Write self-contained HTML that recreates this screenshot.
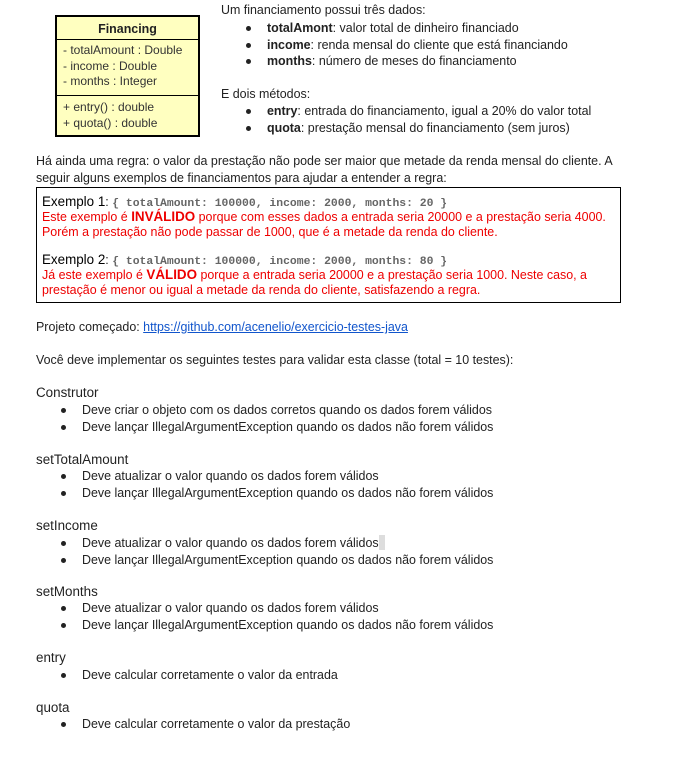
<!DOCTYPE html>
<html><head><meta charset="utf-8"><style>
body{margin:0;width:680px;height:763px;background:#fff;font-family:"Liberation Sans",sans-serif;font-size:12.45px;color:#222;position:relative;overflow:hidden}
.l{position:absolute;white-space:nowrap;line-height:16px}
.b{position:absolute;width:5px;height:5px;border-radius:50%;background:#222}
.h{font-size:13.4px}
.red{color:#e00}
.mono{font-family:"Liberation Mono",monospace;color:#666;font-size:11.4px;font-weight:bold}
.uml{position:absolute;left:55px;top:15px;width:141px;height:118px;background:#ffffc0;border:2px solid #000}
.uml div{position:absolute;left:0;right:0}
</style></head><body>
<div class="uml">
<div style="top:4px;text-align:center;font-weight:bold;line-height:16px">Financing</div>
<div style="top:22px;border-top:1px solid #000"></div>
<div style="top:26px;left:6px;line-height:15.5px;color:#333;font-size:12px">- totalAmount : Double<br>- income : Double<br>- months : Integer</div>
<div style="top:78px;border-top:1px solid #000"></div>
<div style="top:82px;left:6px;line-height:16px;color:#333;font-size:12px">+ entry() : double<br>+ quota() : double</div>
</div>

<div class="l" style="left:221px;top:2px">Um financiamento possui três dados:</div>
<div class="b" style="left:246px;top:26px"></div><div class="l" style="left:267px;top:20px"><b>totalAmont</b>: valor total de dinheiro financiado</div>
<div class="b" style="left:246px;top:43px"></div><div class="l" style="left:267px;top:37px"><b>income</b>: renda mensal do cliente que está financiando</div>
<div class="b" style="left:246px;top:59px"></div><div class="l" style="left:267px;top:53px"><b>months</b>: número de meses do financiamento</div>
<div class="l" style="left:221px;top:86px">E dois métodos:</div>
<div class="b" style="left:246px;top:109px"></div><div class="l" style="left:267px;top:103px"><b>entry</b>: entrada do financiamento, igual a 20% do valor total</div>
<div class="b" style="left:246px;top:126px"></div><div class="l" style="left:267px;top:120px"><b>quota</b>: prestação mensal do financiamento (sem juros)</div>

<div class="l" style="left:36px;top:153px">Há ainda uma regra: o valor da prestação não pode ser maior que metade da renda mensal do cliente. A</div>
<div class="l" style="left:36px;top:170px">seguir alguns exemplos de financiamentos para ajudar a entender a regra:</div>

<div style="position:absolute;left:36px;top:187px;width:583px;height:114px;border:1px solid #000"></div>
<div class="l" style="left:42px;top:194px"><span class="h" style="color:#000">Exemplo 1</span>: <span class="mono">{ totalAmount: 100000, income: 2000, months: 20 }</span></div>
<div class="l red" style="left:42px;top:209px">Este exemplo é <b class="h">INVÁLIDO</b> porque com esses dados a entrada seria 20000 e a prestação seria 4000.</div>
<div class="l red" style="left:42px;top:224px">Porém a prestação não pode passar de 1000, que é a metade da renda do cliente.</div>
<div class="l" style="left:42px;top:252px"><span class="h" style="color:#000">Exemplo 2</span>: <span class="mono">{ totalAmount: 100000, income: 2000, months: 80 }</span></div>
<div class="l red" style="left:42px;top:267px">Já este exemplo é <b class="h">VÁLIDO</b> porque a entrada seria 20000 e a prestação seria 1000. Neste caso, a</div>
<div class="l red" style="left:42px;top:282px">prestação é menor ou igual a metade da renda do cliente, satisfazendo a regra.</div>

<div class="l" style="left:36px;top:319px">Projeto começado: <span style="color:#1155cc;text-decoration:underline">https://github.com/acenelio/exercicio-testes-java</span></div>
<div class="l" style="left:36px;top:352px">Você deve implementar os seguintes testes para validar esta classe (total = 10 testes):</div>

<div class="l h" style="left:36px;top:385px">Construtor</div>
<div class="b" style="left:61px;top:408px"></div><div class="l" style="left:82px;top:402px">Deve criar o objeto com os dados corretos quando os dados forem válidos</div>
<div class="b" style="left:61px;top:425px"></div><div class="l" style="left:82px;top:419px">Deve lançar IllegalArgumentException quando os dados não forem válidos</div>

<div class="l h" style="left:36px;top:452px">setTotalAmount</div>
<div class="b" style="left:61px;top:474px"></div><div class="l" style="left:82px;top:468px">Deve atualizar o valor quando os dados forem válidos</div>
<div class="b" style="left:61px;top:491px"></div><div class="l" style="left:82px;top:485px">Deve lançar IllegalArgumentException quando os dados não forem válidos</div>

<div class="l h" style="left:36px;top:518px">setIncome</div>
<div class="b" style="left:61px;top:541px"></div><div class="l" style="left:82px;top:535px">Deve atualizar o valor quando os dados forem válidos<span style="display:inline-block;width:6px;height:15px;background:#ddd;vertical-align:-3px"></span></div>
<div class="b" style="left:61px;top:558px"></div><div class="l" style="left:82px;top:552px">Deve lançar IllegalArgumentException quando os dados não forem válidos</div>

<div class="l h" style="left:36px;top:584px">setMonths</div>
<div class="b" style="left:61px;top:606px"></div><div class="l" style="left:82px;top:600px">Deve atualizar o valor quando os dados forem válidos</div>
<div class="b" style="left:61px;top:623px"></div><div class="l" style="left:82px;top:617px">Deve lançar IllegalArgumentException quando os dados não forem válidos</div>

<div class="l h" style="left:36px;top:650px">entry</div>
<div class="b" style="left:61px;top:673px"></div><div class="l" style="left:82px;top:667px">Deve calcular corretamente o valor da entrada</div>

<div class="l h" style="left:36px;top:700px">quota</div>
<div class="b" style="left:61px;top:722px"></div><div class="l" style="left:82px;top:716px">Deve calcular corretamente o valor da prestação</div>
</body></html>
